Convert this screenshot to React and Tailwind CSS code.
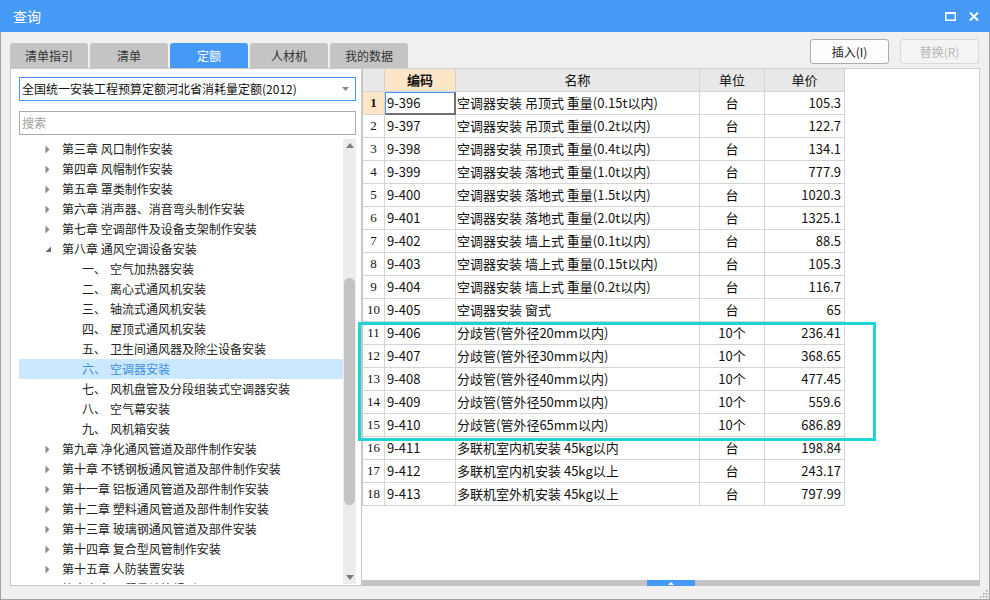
import { useState } from 'react'

const tabs = ['清单指引', '清单', '定额', '人材机', '我的数据']

const tree = [
  { kind: 'ch', label: '第三章 风口制作安装' },
  { kind: 'ch', label: '第四章 风帽制作安装' },
  { kind: 'ch', label: '第五章 罩类制作安装' },
  { kind: 'ch', label: '第六章 消声器、消音弯头制作安装' },
  { kind: 'ch', label: '第七章 空调部件及设备支架制作安装' },
  { kind: 'ch', label: '第八章 通风空调设备安装', open: true },
  { kind: 'sub', num: '一、', label: '空气加热器安装' },
  { kind: 'sub', num: '二、', label: '离心式通风机安装' },
  { kind: 'sub', num: '三、', label: '轴流式通风机安装' },
  { kind: 'sub', num: '四、', label: '屋顶式通风机安装' },
  { kind: 'sub', num: '五、', label: '卫生间通风器及除尘设备安装' },
  { kind: 'sub', num: '六、', label: '空调器安装', selected: true },
  { kind: 'sub', num: '七、', label: '风机盘管及分段组装式空调器安装' },
  { kind: 'sub', num: '八、', label: '空气幕安装' },
  { kind: 'sub', num: '九、', label: '风机箱安装' },
  { kind: 'ch', label: '第九章 净化通风管道及部件制作安装' },
  { kind: 'ch', label: '第十章 不锈钢板通风管道及部件制作安装' },
  { kind: 'ch', label: '第十一章 铝板通风管道及部件制作安装' },
  { kind: 'ch', label: '第十二章 塑料通风管道及部件制作安装' },
  { kind: 'ch', label: '第十三章 玻璃钢通风管道及部件安装' },
  { kind: 'ch', label: '第十四章 复合型风管制作安装' },
  { kind: 'ch', label: '第十五章 人防装置安装' },
  { kind: 'ch', label: '第十六章 工程量计算规则项目' },
]

const rows = [
  ['9-396', '空调器安装 吊顶式 重量(0.15t以内)', '台', '105.3'],
  ['9-397', '空调器安装 吊顶式 重量(0.2t以内)', '台', '122.7'],
  ['9-398', '空调器安装 吊顶式 重量(0.4t以内)', '台', '134.1'],
  ['9-399', '空调器安装 落地式 重量(1.0t以内)', '台', '777.9'],
  ['9-400', '空调器安装 落地式 重量(1.5t以内)', '台', '1020.3'],
  ['9-401', '空调器安装 落地式 重量(2.0t以内)', '台', '1325.1'],
  ['9-402', '空调器安装 墙上式 重量(0.1t以内)', '台', '88.5'],
  ['9-403', '空调器安装 墙上式 重量(0.15t以内)', '台', '105.3'],
  ['9-404', '空调器安装 墙上式 重量(0.2t以内)', '台', '116.7'],
  ['9-405', '空调器安装 窗式', '台', '65'],
  ['9-406', '分歧管(管外径20mm以内)', '10个', '236.41'],
  ['9-407', '分歧管(管外径30mm以内)', '10个', '368.65'],
  ['9-408', '分歧管(管外径40mm以内)', '10个', '477.45'],
  ['9-409', '分歧管(管外径50mm以内)', '10个', '559.6'],
  ['9-410', '分歧管(管外径65mm以内)', '10个', '686.89'],
  ['9-411', '多联机室内机安装 45kg以内', '台', '198.84'],
  ['9-412', '多联机室内机安装 45kg以上', '台', '243.17'],
  ['9-413', '多联机室外机安装 45kg以上', '台', '797.99'],
]

function Arrow({ open }) {
  if (open) {
    return (
      <svg width="7" height="7" viewBox="0 0 7 7">
        <path d="M6 0.5 L6 6 L0.5 6 Z" fill="#6a6a6a" />
      </svg>
    )
  }
  return (
    <svg width="5" height="9" viewBox="0 0 5 9">
      <path d="M0.5 0.5 L4.5 4.5 L0.5 8.5 Z" fill="#8c8c8c" />
    </svg>
  )
}

function TreeRow({ item }) {
  if (item.kind === 'sub') {
    return (
      <div
        className={`flex h-[20px] items-center pl-[63px] text-[12px] ${
          item.selected ? 'bg-[#cce8ff] text-[#3b8ee5]' : 'text-[#222]'
        }`}
      >
        <span className="w-[28px]">{item.num}</span>
        <span>{item.label}</span>
      </div>
    )
  }
  return (
    <div className="flex h-[20px] items-center text-[12px] text-[#222]">
      <span className="w-[26px]" />
      <span className="flex w-[17px] items-center">
        <Arrow open={item.open} />
      </span>
      <span>{item.label}</span>
    </div>
  )
}

export default function App() {
  const [activeTab] = useState('定额')

  return (
    <div className="flex h-[600px] w-[990px] flex-col overflow-hidden bg-[#f0f0f0] font-['Noto_Sans_CJK_SC',sans-serif]">
      {/* title bar */}
      <div className="flex h-[32px] shrink-0 items-center justify-between bg-[#4599f7] pl-[13px] pr-[11px] text-white">
        <span className="text-[14px]">查询</span>
        <div className="flex items-center gap-[13px]">
          <svg width="11" height="9" viewBox="0 0 11 9">
            <rect x="0.75" y="1" width="9.5" height="7.25" fill="none" stroke="#fff" strokeWidth="1.5" />
            <rect x="0" y="0" width="11" height="2" fill="#fff" />
          </svg>
          <svg width="10" height="9" viewBox="0 0 10 9">
            <path d="M1 0.5 L9 8.5 M9 0.5 L1 8.5" stroke="#fff" strokeWidth="2" />
          </svg>
        </div>
      </div>

      <div className="flex flex-1 flex-col border-x border-b border-[#a3a3a3]">
        {/* tabs + buttons */}
        <div className="flex h-[36px] shrink-0 justify-between pl-[9px] pr-[9px]">
          <div className="mt-[11px] flex gap-[2px]">
            {tabs.map((t) => (
              <div
                key={t}
                className={`flex h-[25px] w-[78px] items-center justify-center rounded-t-[3px] text-[12px] ${
                  t === activeTab ? 'bg-[#4599f7] text-white' : 'bg-[#c4c4c4] text-[#333]'
                }`}
              >
                {t}
              </div>
            ))}
          </div>
          <div className="mt-[7px] flex gap-[11px] pr-px">
            <button
              type="button"
              className="h-[25px] w-[79px] rounded-[3px] border border-[#acacac] bg-[#fdfdfd] text-[12px] text-[#222]"
            >
              插入(I)
            </button>
            <button
              type="button"
              disabled
              className="h-[25px] w-[79px] rounded-[3px] border border-[#dadada] bg-[#f4f4f4] text-[12px] text-[#b4b4b4]"
            >
              替换(R)
            </button>
          </div>
        </div>

        {/* panels */}
        <div className="flex h-[518px] shrink-0 pl-[9px] pr-[9px]">
          {/* left tree panel */}
          <div className="flex w-[352px] shrink-0 flex-col border border-[#c9c9c9] bg-white pb-px pl-[8px] pr-[5px] pt-[8px]">
            <div className="flex h-[24px] shrink-0 items-center justify-between border border-[#4599f7] pl-[2px] pr-[6px] text-[12px] text-[#111]">
              <span>全国统一安装工程预算定额河北省消耗量定额(2012)</span>
              <svg width="7" height="4" viewBox="0 0 7 4">
                <path d="M0 0 L7 0 L3.5 4 Z" fill="#8a8a8a" />
              </svg>
            </div>
            <div className="mt-[10px] flex h-[24px] shrink-0 items-center border border-[#ababab] pl-[2px] text-[12px] text-[#a0a0a0]">
              搜索
            </div>
            <div className="mt-[4px] flex min-h-0 flex-1">
              <div className="min-w-0 flex-1 overflow-hidden">
                {tree.map((item, i) => (
                  <TreeRow key={i} item={item} />
                ))}
              </div>
              <div className="flex w-[13px] shrink-0 flex-col items-center bg-[#ececec]">
                <svg className="mt-[4px]" width="8" height="5" viewBox="0 0 8 5">
                  <path d="M0 5 L4 0 L8 5 Z" fill="#7d7d7d" />
                </svg>
                <div className="mt-[130px] h-[227px] w-[11px] rounded-full bg-[#c3c3c3]" />
                <div className="flex-1" />
                <svg className="mb-[4px]" width="8" height="5" viewBox="0 0 8 5">
                  <path d="M0 0 L8 0 L4 5 Z" fill="#7d7d7d" />
                </svg>
              </div>
            </div>
          </div>

          {/* right table panel */}
          <div className="flex min-w-0 flex-1 flex-col">
            <div className="relative flex-1 border-r border-t border-[#cfcfcf] bg-white">
              <div className="grid w-[482px] grid-cols-[22px_71px_244px_65px_80px] border-l border-[#c6c6c6] text-[13px] text-[#111]">
                <div className="h-[23px] border-b border-r border-[#d4d4d4] bg-[#e8e8e8]" />
                <div className="flex h-[23px] items-center justify-center border-b border-r border-[#d4d4d4] bg-[#fde5c8] font-bold">
                  编码
                </div>
                <div className="flex h-[23px] items-center justify-center border-b border-r border-[#d4d4d4] bg-[#e8e8e8]">
                  名称
                </div>
                <div className="flex h-[23px] items-center justify-center border-b border-r border-[#d4d4d4] bg-[#e8e8e8]">
                  单位
                </div>
                <div className="flex h-[23px] items-center justify-center border-b border-r border-[#d4d4d4] bg-[#e8e8e8]">
                  单价
                </div>
                {rows.map(([code, name, unit, price], i) => (
                  <div key={code} className="contents">
                    <div
                      className={`flex h-[23px] items-center justify-center border-b border-r border-[#d4d4d4] font-['Liberation_Serif',serif] text-[13px] ${
                        i === 0 ? 'bg-[#fde5c8] font-bold' : 'bg-white'
                      }`}
                    >
                      {i + 1}
                    </div>
                    {i === 0 ? (
                      <div className="flex h-[23px] items-center border-b-2 border-l border-r-2 border-t border-b-[#707070] border-l-[#4599f7] border-r-[#707070] border-t-[#4599f7] pl-[1px]">
                        {code}
                      </div>
                    ) : (
                      <div className="flex h-[23px] items-center border-b border-r border-[#d4d4d4] pl-[2px]">
                        {code}
                      </div>
                    )}
                    <div className="flex h-[23px] items-center whitespace-nowrap border-b border-r border-[#d4d4d4] pl-[1px]">
                      {name}
                    </div>
                    <div className="flex h-[23px] items-center justify-center border-b border-r border-[#d4d4d4]">
                      {unit}
                    </div>
                    <div className="flex h-[23px] items-center justify-end border-b border-r border-[#d4d4d4] pr-[3px]">
                      {price}
                    </div>
                  </div>
                ))}
              </div>
              {/* highlight box over rows 11-15 */}
              <div className="absolute left-[-4px] top-[253px] h-[119px] w-[518px] border-[3px] border-[#20d4d6]" />
            </div>
            <div className="flex h-[6px] shrink-0 justify-center bg-[#c4c4c4]">
              <div className="flex w-[48px] items-center justify-center bg-[#4599f7]">
                <svg width="6" height="3" viewBox="0 0 6 3">
                  <path d="M0 3 L3 0 L6 3 Z" fill="#fff" />
                </svg>
              </div>
            </div>
          </div>
        </div>

        {/* status strip with grip */}
        <div className="flex flex-1 items-end justify-end pb-[1px] pr-[1px]">
          <svg width="9" height="9" viewBox="0 0 9 9">
            <rect x="7" y="1" width="1.5" height="1.5" fill="#9a9a9a" />
            <rect x="4" y="4" width="1.5" height="1.5" fill="#9a9a9a" />
            <rect x="7" y="4" width="1.5" height="1.5" fill="#9a9a9a" />
            <rect x="1" y="7" width="1.5" height="1.5" fill="#9a9a9a" />
            <rect x="4" y="7" width="1.5" height="1.5" fill="#9a9a9a" />
            <rect x="7" y="7" width="1.5" height="1.5" fill="#9a9a9a" />
          </svg>
        </div>
      </div>
    </div>
  )
}
